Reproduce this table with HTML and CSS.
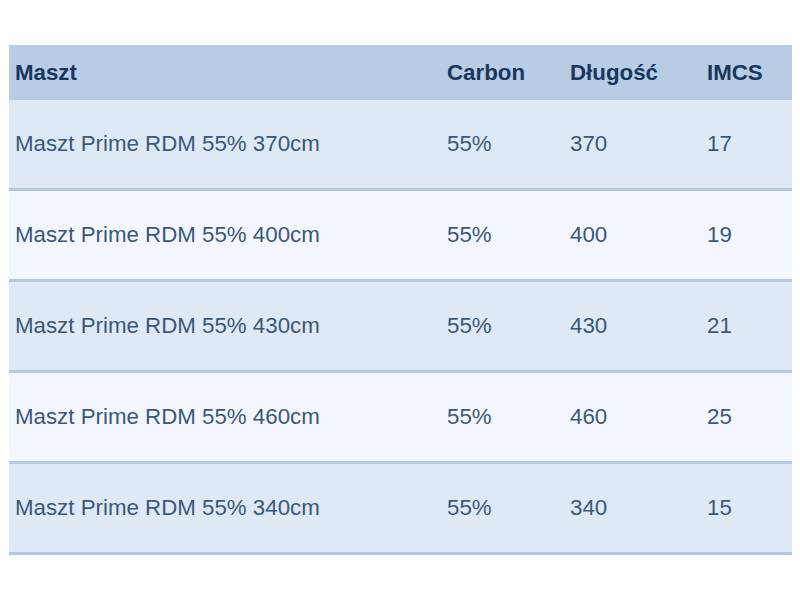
FILE: index.html
```html
<!DOCTYPE html>
<html lang="pl">
<head>
<meta charset="utf-8">
<title>Maszty</title>
<link rel="stylesheet" href="styles.css">
</head>
<body>
<table class="spec">
  <thead>
    <tr><th class="c1">Maszt</th><th class="c2">Carbon</th><th class="c3">Długość</th><th class="c4">IMCS</th></tr>
  </thead>
  <tbody>
    <tr class="odd"><td>Maszt Prime RDM 55% 370cm</td><td>55%</td><td>370</td><td>17</td></tr>
    <tr class="even"><td>Maszt Prime RDM 55% 400cm</td><td>55%</td><td>400</td><td>19</td></tr>
    <tr class="odd"><td>Maszt Prime RDM 55% 430cm</td><td>55%</td><td>430</td><td>21</td></tr>
    <tr class="even"><td>Maszt Prime RDM 55% 460cm</td><td>55%</td><td>460</td><td>25</td></tr>
    <tr class="odd"><td>Maszt Prime RDM 55% 340cm</td><td>55%</td><td>340</td><td>15</td></tr>
  </tbody>
</table>
</body>
</html>
```
FILE: styles.css
```css
html, body {
  margin: 0;
  padding: 0;
  background: #ffffff;
}
body {
  padding: 45px 8px 0 9px;
  font-family: "Liberation Sans", Arial, sans-serif;
}
.spec {
  width: 783px;
  border-collapse: collapse;
  table-layout: fixed;
  font-size: 22.3px;
}
.spec th, .spec td {
  padding: 0 6px;
  text-align: left;
  vertical-align: middle;
}
.spec th {
  height: 55px;
  background: #b8cce4;
  color: #17375e;
  font-weight: bold;
}
.c1 { width: 420px; }
.c2 { width: 111px; }
.c3 { width: 125px; }
.c4 { width: 79px; }
.spec td {
  height: 88px;
  color: #3b587b;
  border-bottom: 3px solid #b6c8e1;
}
.odd td { background: #dfe9f6; }
.even td { background: #f3f7fd; }
```
